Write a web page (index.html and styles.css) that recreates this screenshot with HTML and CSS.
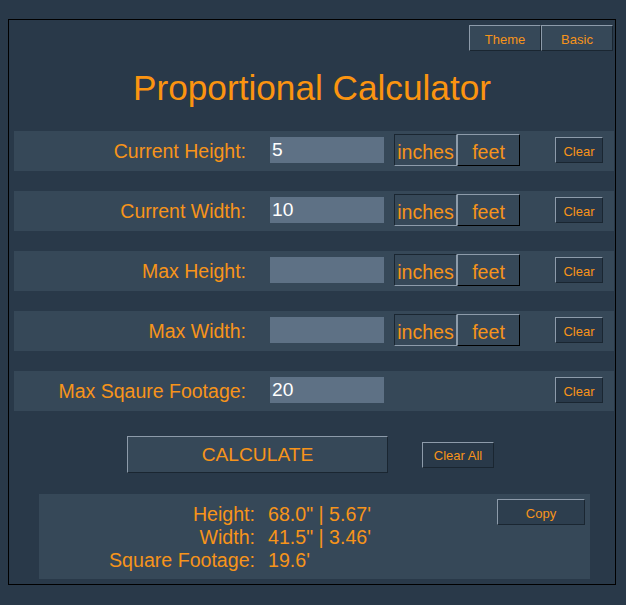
FILE: index.html
```html
<!DOCTYPE html>
<html>
<head>
<meta charset="utf-8">
<link rel="stylesheet" href="styles.css">
</head>
<body>
<div class="app">
  <div class="topbar">
    <button class="btn top-btn">Theme</button>
    <button class="btn top-btn">Basic</button>
  </div>
  <h1 class="title">Proportional Calculator</h1>

  <div class="row">
    <label class="label">Current Height:</label>
    <input class="field" type="text" value="5">
    <div class="units">
      <button class="unit unit-on">inches</button>
      <button class="unit">feet</button>
    </div>
    <button class="btn clear">Clear</button>
  </div>

  <div class="row">
    <label class="label">Current Width:</label>
    <input class="field" type="text" value="10">
    <div class="units">
      <button class="unit unit-on">inches</button>
      <button class="unit">feet</button>
    </div>
    <button class="btn clear">Clear</button>
  </div>

  <div class="row">
    <label class="label">Max Height:</label>
    <input class="field" type="text" value="">
    <div class="units">
      <button class="unit unit-on">inches</button>
      <button class="unit">feet</button>
    </div>
    <button class="btn clear">Clear</button>
  </div>

  <div class="row">
    <label class="label">Max Width:</label>
    <input class="field" type="text" value="">
    <div class="units">
      <button class="unit unit-on">inches</button>
      <button class="unit">feet</button>
    </div>
    <button class="btn clear">Clear</button>
  </div>

  <div class="row">
    <label class="label">Max Sqaure Footage:</label>
    <input class="field" type="text" value="20">
    <div class="units"></div>
    <button class="btn clear">Clear</button>
  </div>

  <div class="actions">
    <button class="btn calc">CALCULATE</button>
    <button class="btn clear-all">Clear All</button>
  </div>

  <div class="result">
    <div class="result-grid">
      <span class="r-label">Height:</span><span class="r-value">68.0" | 5.67'</span>
      <span class="r-label">Width:</span><span class="r-value">41.5" | 3.46'</span>
      <span class="r-label">Square Footage:</span><span class="r-value">19.6'</span>
    </div>
    <button class="btn copy">Copy</button>
  </div>
</div>
</body>
</html>
```
FILE: styles.css
```css
html, body {
  margin: 0;
  padding: 0;
  background: #293949;
  font-family: "Liberation Sans", Arial, sans-serif;
  color: #f7941a;
}

.app {
  margin: 19px 0 0 8px;
  width: 606px;
  height: 564px;
  border: 1px solid #000;
  background: #293949;
}

.topbar {
  display: flex;
  justify-content: flex-end;
  padding: 5px 2px 0 0;
}

.btn {
  box-sizing: border-box;
  font-family: "Liberation Sans", Arial, sans-serif;
  color: #f7941a;
  font-size: 13px;
  padding: 2px 0 0 0;
  margin: 0;
  border-style: solid;
  border-width: 1px;
  border-color: #8d9baa #1a2631 #1a2631 #8d9baa;
  background: #293949;
  cursor: pointer;
}

.top-btn {
  width: 72px;
  height: 26px;
  background: #364858;
}

.title {
  margin: 17px 0 0 0;
  height: 40px;
  line-height: 40px;
  font-size: 35.2px;
  font-weight: normal;
  text-align: center;
  color: #fb9410;
}

.row {
  box-sizing: border-box;
  margin: 23px 0 0 5px;
  width: 600px;
  height: 40px;
  padding-bottom: 2px;
  background: #364858;
  display: grid;
  grid-template-columns: 232px 138px 136px 48px;
  align-items: center;
}

.row + .row {
  margin-top: 20px;
}

.label {
  font-size: 19.5px;
  text-align: right;
  padding-top: 2px;
}

.field {
  box-sizing: border-box;
  margin-left: 24px;
  width: 114px;
  height: 26px;
  border: none;
  outline: none;
  padding: 0 2px;
  background: #5e7185;
  color: #fff;
  font-family: "Liberation Sans", Arial, sans-serif;
  font-size: 19.2px;
}

.units {
  display: flex;
  margin-left: 10px;
}

.unit {
  box-sizing: border-box;
  width: 63px;
  height: 32px;
  padding: 4px 0 0 0;
  margin: 0;
  background: #364858;
  color: #f7941a;
  font-family: "Liberation Sans", Arial, sans-serif;
  font-size: 19.6px;
  border-style: solid;
  border-width: 1px;
  border-color: #8d9baa #000 #000 #8d9baa;
}

.unit-on {
  border-color: #1a2631 #8d9baa #8d9baa #1a2631;
}

.clear {
  margin-left: 35px;
  width: 48px;
  height: 26px;
}

.actions {
  display: flex;
  align-items: center;
  margin: 25px 0 0 118px;
}

.calc {
  width: 261px;
  height: 37px;
  padding: 1px 0 0 0;
  background: #364858;
  font-size: 19.2px;
}

.clear-all {
  margin-left: 34px;
  width: 72px;
  height: 26px;
}

.result {
  box-sizing: border-box;
  margin: 21px 0 0 30px;
  width: 551px;
  height: 85px;
  background: #364858;
  display: flex;
  justify-content: space-between;
  align-items: flex-start;
}

.result-grid {
  display: grid;
  grid-template-columns: 216px auto;
  column-gap: 13px;
  margin-top: 9px;
  font-size: 19.6px;
  line-height: 23px;
}

.r-label {
  text-align: right;
}

.copy {
  width: 88px;
  height: 26px;
  margin: 5px 5px 0 0;
  background: #2d3e4e;
}
```
